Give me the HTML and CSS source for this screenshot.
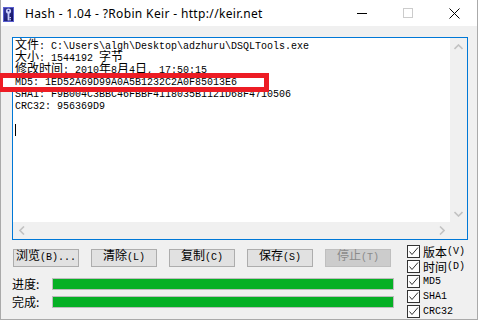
FILE: index.html
```html
<!DOCTYPE html>
<html lang="zh-cn">
<head>
    <meta charset="UTF-8">
    <title>Hash - 1.04</title>
    <link rel="stylesheet" href="styles.css">
</head>
<body>
    <div class="window">
        <div class="titlebar">
            <svg class="app-icon" width="11" height="15" viewBox="0 0 11 15">
                <defs>
                    <linearGradient id="iconBg" x1="0" y1="0" x2="1" y2="1">
                        <stop offset="0" stop-color="#3b3fa8"/>
                        <stop offset="1" stop-color="#0b0b55"/>
                    </linearGradient>
                </defs>
                <rect x="0" y="0" width="11" height="15" fill="url(#iconBg)"/>
                <rect x="0.5" y="0.5" width="10" height="14" fill="none" stroke="#5a5fd0" stroke-width="1"/>
                <circle cx="5.5" cy="4" r="2.6" fill="#c9cdfa"/>
                <circle cx="5.5" cy="3.6" r="0.9" fill="#1c1d78"/>
                <rect x="4.6" y="6" width="1.8" height="7.5" fill="#c9cdfa"/>
                <rect x="6.4" y="10" width="1.6" height="1.2" fill="#c9cdfa"/>
                <rect x="6.4" y="12.2" width="1.6" height="1.2" fill="#c9cdfa"/>
            </svg>
            <span class="title">Hash - 1.04 - ?Robin Keir - http://keir.net</span>
            <div class="caption-btns">
                <span class="caption">
                    <svg width="10" height="10" viewBox="0 0 10 10"><line x1="0" y1="5.5" x2="10" y2="5.5" stroke="#000" stroke-width="1"/></svg>
                </span>
                <span class="caption">
                    <svg width="10" height="10" viewBox="0 0 10 10"><rect x="0.5" y="0.5" width="9" height="9" fill="none" stroke="#cccccc" stroke-width="1"/></svg>
                </span>
                <span class="caption">
                    <svg width="11" height="11" viewBox="0 0 11 11"><path d="M0.5 0.5 L10.5 10.5 M10.5 0.5 L0.5 10.5" stroke="#000" stroke-width="1"/></svg>
                </span>
            </div>
        </div>

        <div class="client">
            <div class="output">
                <div class="output-text">
                    <div class="line"><span class="cn">文件</span>: C:\Users\algh\Desktop\adzhuru\DSQLTools.exe</div>
                    <div class="line"><span class="cn">大小</span>: 1544192 <span class="cn">字节</span></div>
                    <div class="line"><span class="cn">修改时间</span>: 2010<span class="cn">年</span>8<span class="cn">月</span>4<span class="cn">日</span>, 17:50:15</div>
                    <div class="line hl">MD5: 1ED52A69D99A0A5B1232C2A0F85013E6</div>
                    <div class="line">SHA1: F9B004C3BBC46FBBF4118035B1121D68F4710506</div>
                    <div class="line">CRC32: 956369D9</div>
                    <div class="line"></div>
                    <div class="line"><span class="caret"></span></div>
                </div>
                <div class="vscroll">
                    <span class="arrow">
                        <svg width="9" height="6" viewBox="0 0 9 6"><polyline points="0.5,5 4.5,1 8.5,5" fill="none" stroke="#c2c2c2" stroke-width="1.6"/></svg>
                    </span>
                    <span class="arrow">
                        <svg width="9" height="6" viewBox="0 0 9 6"><polyline points="0.5,1 4.5,5 8.5,1" fill="none" stroke="#c2c2c2" stroke-width="1.6"/></svg>
                    </span>
                </div>
                <div class="hscroll">
                    <span class="arrow">
                        <svg width="6" height="9" viewBox="0 0 6 9"><polyline points="5,0.5 1,4.5 5,8.5" fill="none" stroke="#c2c2c2" stroke-width="1.6"/></svg>
                    </span>
                    <span class="arrow">
                        <svg width="6" height="9" viewBox="0 0 6 9"><polyline points="1,0.5 5,4.5 1,8.5" fill="none" stroke="#c2c2c2" stroke-width="1.6"/></svg>
                    </span>
                </div>
                <div class="corner"></div>
            </div>

            <div class="controls">
                <div class="main-controls">
                    <div class="buttons">
                        <button class="btn"><span class="cn">浏览</span>(B)...</button>
                        <button class="btn"><span class="cn">清除</span>(L)</button>
                        <button class="btn"><span class="cn">复制</span>(C)</button>
                        <button class="btn"><span class="cn">保存</span>(S)</button>
                        <button class="btn" disabled><span class="cn">停止</span>(T)</button>
                    </div>
                    <div class="progress-row first">
                        <span class="progress-label">进度:</span>
                        <div class="progress"><div class="progress-fill"></div></div>
                    </div>
                    <div class="progress-row">
                        <span class="progress-label">完成:</span>
                        <div class="progress"><div class="progress-fill"></div></div>
                    </div>
                </div>

                <div class="options">
                    <label class="option"><span class="check"><svg width="11" height="11" viewBox="0 0 11 11"><polyline points="1.5,5.5 4,8.5 10,1.5" fill="none" stroke="#333" stroke-width="1"/></svg></span><span class="cn">版本</span>(V)</label>
                    <label class="option"><span class="check"><svg width="11" height="11" viewBox="0 0 11 11"><polyline points="1.5,5.5 4,8.5 10,1.5" fill="none" stroke="#333" stroke-width="1"/></svg></span><span class="cn">时间</span>(D)</label>
                    <label class="option"><span class="check"><svg width="11" height="11" viewBox="0 0 11 11"><polyline points="1.5,5.5 4,8.5 10,1.5" fill="none" stroke="#333" stroke-width="1"/></svg></span>MD5</label>
                    <label class="option"><span class="check"><svg width="11" height="11" viewBox="0 0 11 11"><polyline points="1.5,5.5 4,8.5 10,1.5" fill="none" stroke="#333" stroke-width="1"/></svg></span>SHA1</label>
                    <label class="option"><span class="check"><svg width="11" height="11" viewBox="0 0 11 11"><polyline points="1.5,5.5 4,8.5 10,1.5" fill="none" stroke="#333" stroke-width="1"/></svg></span>CRC32</label>
                </div>
            </div>
        </div>
    </div>
</body>
</html>
```

FILE: styles.css
```css
*,
*::before {
    box-sizing: border-box;
    margin: 0;
    padding: 0;
}

body {
    background: #fff;
    font-family: "Liberation Mono", "Noto Sans CJK SC", monospace;
    font-size: 10px;
    color: #000;
}

/* CJK glyphs are twice the width of the mono ones */
.cn {
    font-family: "Noto Sans CJK SC", sans-serif;
    font-size: 12px;
    line-height: 0;
}

.window {
    width: 478px;
    height: 320px;
    border: 1px solid #aaaaaa;
    border-top: 0;
    background: #f0f0f0;
    display: flex;
    flex-direction: column;
}

/* title bar */
.titlebar {
    height: 26px;
    background: #fff;
    display: flex;
    align-items: center;
    flex-shrink: 0;
}

.app-icon {
    margin-left: 2px;
    margin-top: 2px;
}

.title {
    flex: 1;
    margin-left: 11px;
    font-family: "Noto Sans", sans-serif;
    font-size: 12px;
    letter-spacing: 0.35px;
}

.caption-btns {
    display: flex;
}

.caption {
    width: 46px;
    height: 26px;
    display: flex;
    align-items: center;
    justify-content: center;
}

/* client area */
.client {
    flex: 1;
    padding: 11px 0 0 11px;
}

.output {
    width: 456px;
    height: 203px;
    border: 1px solid #0078d7;
    background: #fff;
    display: grid;
    grid-template-columns: 1fr 17px;
    grid-template-rows: 1fr 17px;
}

.output-text {
    padding: 3px 0 0 2px;
}

.line {
    height: 12px;
    line-height: 12px;
    white-space: pre;
}

/* red annotation round the MD5 line */
.hl {
    position: relative;
    z-index: 0;
}

.hl::before {
    content: "";
    position: absolute;
    left: -17px;
    top: -4px;
    width: 271px;
    height: 19px;
    border: 5px solid #ed1c24;
    background: #fff;
    z-index: -1;
}

.caret {
    display: inline-block;
    width: 1px;
    height: 12px;
    background: #000;
    vertical-align: top;
    margin-top: -1px;
}

.vscroll,
.hscroll,
.corner {
    background: #f0f0f0;
}

.vscroll {
    display: flex;
    flex-direction: column;
    justify-content: space-between;
}

.hscroll {
    display: flex;
    justify-content: space-between;
}

.arrow {
    width: 17px;
    height: 17px;
    display: flex;
    align-items: center;
    justify-content: center;
}

.controls {
    display: flex;
    margin-top: 4px;
}

.main-controls {
    width: 395px;
    padding-top: 5px;
}

.buttons {
    display: flex;
    gap: 12px;
    margin-left: 1px;
}

.btn {
    width: 66px;
    height: 18px;
    border: 1px solid #adadad;
    background: #e1e1e1;
    font-family: "Liberation Mono", monospace;
    font-size: 10px;
    line-height: 16px;
    color: #000;
    white-space: pre;
}

.btn:disabled {
    background: #cccccc;
    border-color: #bfbfbf;
    color: #8a8a8a;
}

.progress-row {
    display: flex;
    align-items: center;
    height: 18px;
}

.progress-row.first {
    margin-top: 8px;
}

.progress-label {
    width: 40px;
    font-family: "Noto Sans CJK SC", sans-serif;
    font-size: 12px;
    line-height: 14px;
}

.progress {
    width: 342px;
    height: 12px;
    border: 1px solid #bcbcbc;
    background: #e6e6e6;
}

.progress-fill {
    width: 100%;
    height: 100%;
    background: #06b025;
}

.options {
    display: flex;
    flex-direction: column;
}

.option {
    display: flex;
    align-items: center;
    height: 15px;
    line-height: 12px;
    white-space: pre;
}

.check {
    width: 13px;
    height: 13px;
    border: 1px solid #333;
    background: #fff;
    margin-right: 3px;
    display: flex;
    align-items: center;
    justify-content: center;
}
```
